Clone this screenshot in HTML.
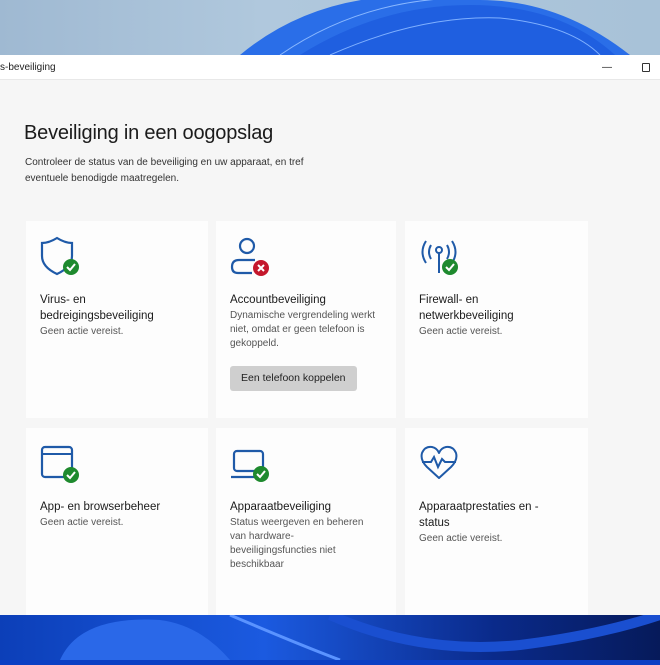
<!DOCTYPE html>
<html><head><meta charset="utf-8"><style>
*{margin:0;padding:0;box-sizing:border-box}
body{width:660px;height:660px;overflow:hidden;position:relative;font-family:"Liberation Sans",sans-serif;background:#0b3fc4}
.top{position:absolute;left:0;top:0;width:660px;height:55px;background:linear-gradient(90deg,#9fb9d2,#b0c8dd 40%,#a8c2d8)}
.bot{position:absolute;left:0;top:615px;width:660px;height:45px;background:linear-gradient(90deg,#0c3fb8,#1b5ae0 40%,#0a2a8a 75%,#061a5a)}
.win{position:absolute;left:0;top:55px;width:660px;height:560px;background:#f6f6f6}
.tb{height:25px;background:#fff;border-bottom:1px solid #e8e8e8;font-size:10px;color:#222;line-height:26px;padding-left:0}
h1{position:absolute;left:24px;top:67px;font-size:20px;font-weight:normal;color:#1b1b1b;letter-spacing:-0.2px}
.sub{position:absolute;left:25px;top:100px;font-size:10px;line-height:16px;color:#333;width:300px}
.card{position:absolute;background:#fdfdfd;}
.card svg{position:absolute;left:14px;top:15px}
.t{position:absolute;left:14px;top:71px;font-size:11.5px;line-height:16px;color:#1b1b1b;width:152px}
.d{font-size:10px;line-height:14px;color:#555;margin-top:1px}
.btn{display:inline-block;margin-top:15px;background:#cfcfcf;border-radius:3px;font-size:10.5px;color:#222;padding:6px 11px;line-height:13px}
</style></head><body>
<div class="top">
<svg width="660" height="55"><path d="M240 55 Q330 -20 470 0 L480 0 Q560 0 630 55Z" fill="#2a6ee8"/><path d="M300 55 Q380 5 470 5 Q560 5 615 55Z" fill="#1f5fe0"/><path d="M330 55 Q420 15 500 18 Q570 25 600 55" stroke="#7fb0ff" fill="none"/><path d="M280 55 Q360 0 460 -2" stroke="#8ab8ff" fill="none"/></svg>
</div>
<div class="win">
<div class="tb">s-beveiliging<span style="position:absolute;right:48px;top:0">—</span><span style="position:absolute;right:10px;top:8px;width:8px;height:9px;border:1px solid #333;border-radius:1px"></span></div>
<h1>Beveiliging in een oogopslag</h1>
<div class="sub">Controleer de status van de beveiliging en uw apparaat, en tref eventuele benodigde maatregelen.</div>

<div class="card" style="left:26px;top:166px;width:182px;height:197px">
<svg width="40" height="40" viewBox="0 0 40 40"><path d="M17 2 Q9 7 2 7 V20 Q2 31 17 38 Q32 31 32 20 V7 Q25 7 17 2Z" fill="none" stroke="#1f5aa8" stroke-width="2.2"/><circle cx="31" cy="31" r="8" fill="#1e8a2e"/><path d="M27 31 l3 3 5-6" stroke="#fff" stroke-width="2" fill="none"/></svg>
<div class="t">Virus- en bedreigingsbeveiliging<div class="d">Geen actie vereist.</div></div></div>

<div class="card" style="left:216px;top:166px;width:180px;height:197px">
<svg width="40" height="40" viewBox="0 0 40 40"><circle cx="17" cy="10" r="7" fill="none" stroke="#1f5aa8" stroke-width="2.2"/><path d="M22 37 H8 Q2 37 2 31 Q2 24 9 24 H25" fill="none" stroke="#1f5aa8" stroke-width="2.2"/><circle cx="31" cy="32" r="8" fill="#c4172c"/><path d="M28 29 l6 6 M34 29 l-6 6" stroke="#fff" stroke-width="2"/></svg>
<div class="t">Accountbeveiliging<div class="d">Dynamische vergrendeling werkt<br>niet, omdat er geen telefoon is<br>gekoppeld.</div><div class="btn">Een telefoon koppelen</div></div></div>

<div class="card" style="left:405px;top:166px;width:183px;height:197px">
<svg width="40" height="40" viewBox="0 0 40 40"><path d="M7 5 Q0 16 7 27 M33 5 Q40 16 33 27 M12 9 Q8 16 12 23 M28 9 Q32 16 28 23" fill="none" stroke="#1f5aa8" stroke-width="2"/><circle cx="20" cy="14" r="3" fill="none" stroke="#1f5aa8" stroke-width="2"/><path d="M20 17 V37" stroke="#1f5aa8" stroke-width="2"/><circle cx="31" cy="31" r="8" fill="#1e8a2e"/><path d="M27 31 l3 3 5-6" stroke="#fff" stroke-width="2" fill="none"/></svg>
<div class="t">Firewall- en<br>netwerkbeveiliging<div class="d">Geen actie vereist.</div></div></div>

<div class="card" style="left:26px;top:373px;width:182px;height:187px">
<svg width="40" height="40" viewBox="0 0 40 40"><rect x="2" y="4" width="30" height="30" rx="3" fill="none" stroke="#1f5aa8" stroke-width="2.2"/><path d="M2 11 H32" stroke="#1f5aa8" stroke-width="2"/><circle cx="31" cy="32" r="8" fill="#1e8a2e"/><path d="M27 32 l3 3 5-6" stroke="#fff" stroke-width="2" fill="none"/></svg>
<div class="t">App- en browserbeheer<div class="d">Geen actie vereist.</div></div></div>

<div class="card" style="left:216px;top:373px;width:180px;height:187px">
<svg width="40" height="40" viewBox="0 0 40 40"><rect x="4" y="8" width="29" height="20" rx="3" fill="none" stroke="#1f5aa8" stroke-width="2.2"/><path d="M1 34 H26" stroke="#1f5aa8" stroke-width="2.2"/><circle cx="31" cy="31" r="8" fill="#1e8a2e"/><path d="M27 31 l3 3 5-6" stroke="#fff" stroke-width="2" fill="none"/></svg>
<div class="t">Apparaatbeveiliging<div class="d">Status weergeven en beheren<br>van hardware-<br>beveiligingsfuncties niet<br>beschikbaar</div></div></div>

<div class="card" style="left:405px;top:373px;width:183px;height:187px">
<svg width="40" height="40" viewBox="0 0 40 40"><path d="M8 24 Q1 17 3 10 Q6 3 13 4 Q18 5 20 10 Q22 5 27 4 Q34 3 37 10 Q39 17 32 24 L20 35 Z" fill="none" stroke="#1f5aa8" stroke-width="2" stroke-linejoin="round"/><path d="M3 19 H12 L15 14 L19 24 L23 16 L26 19 H37" fill="none" stroke="#1f5aa8" stroke-width="2"/></svg>
<div class="t">Apparaatprestaties en -<br>status<div class="d">Geen actie vereist.</div></div></div>
</div>
<div class="bot">
<svg width="660" height="45"><path d="M60 45 Q80 0 160 5 Q200 10 230 45Z" fill="#2a68e8"/><path d="M230 0 Q300 30 340 45" stroke="#5a93ff" stroke-width="3" fill="none"/><path d="M330 0 Q420 40 520 30 Q600 20 660 0" stroke="#1a4fd0" stroke-width="10" fill="none"/></svg>
</div>
</body></html>
